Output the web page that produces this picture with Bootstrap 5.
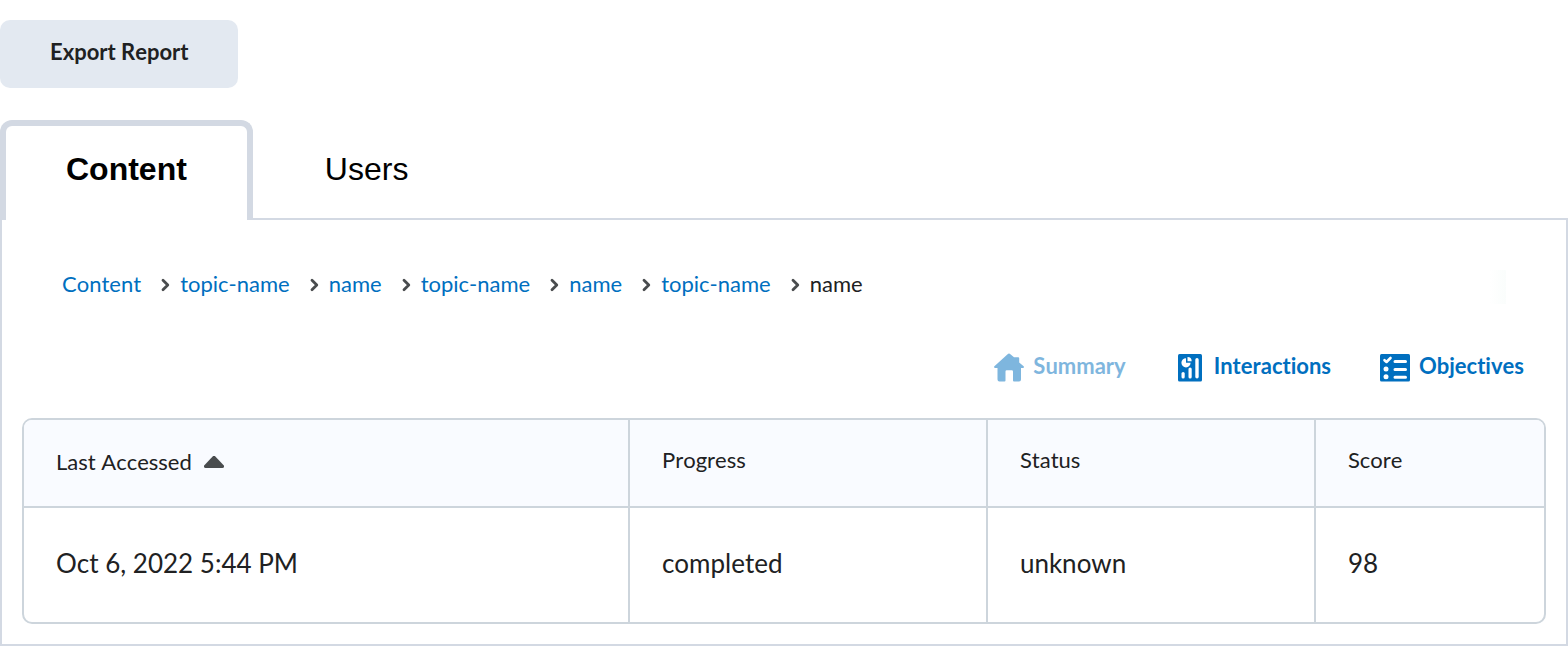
<!DOCTYPE html>
<html lang="en">
<head>
<meta charset="utf-8">
<meta name="viewport" content="width=device-width, initial-scale=1">
<title>Content Report</title>
<link rel="stylesheet" href="https://cdn.jsdelivr.net/npm/bootstrap@5.3.0/dist/css/bootstrap.min.css">
<style>
  body, button { font-kerning: none; font-variant-ligatures: none; }
  body { font-family: Lato, sans-serif; font-size: 22px; line-height: 32px; color: #202122; }
  .export-btn { background: #e3e9f1; color: #202122; font-size: 22px; line-height: 32px; font-weight: 700; padding: 16px 50px 20px; border: 0; border-radius: 10px; }
  .report-tabs { --bs-nav-tabs-border-width: 0; gap: 6px; font-family: "Liberation Sans", Arial, sans-serif; margin-bottom: -2px; position: relative; }
  .report-tabs .nav-link { border: 6px solid transparent; border-bottom: 0; border-radius: 12px 12px 0 0; padding: 23px 60px 31px; margin: 0; font-size: 32px; line-height: 40px; color: #000; }
  .report-tabs .nav-link.active { background: #fff; border-color: #d3d9e3; color: #000; font-weight: 700; }
  .report-panel { border: 2px solid #d3d9e3; padding: 48px 20px 20px; }
  .crumbs { padding: 0 40px; }
  .crumbs a, .view-btn { color: #006fbf; text-decoration: none; }
  .crumb-arrow { width: 9px; height: 14px; margin: 2px 10px 0 20px; }
  .crumb-fade { width: 16px; height: 34px; margin-top: 2px; background: linear-gradient(to right, #fff, #fafdfc); }
  .view-bar { gap: 48px; margin: 46px 0 36px; padding-right: 22px; }
  .view-btn { background: none; border: 0; padding: 0; font-weight: 700; gap: 8px; }
  .view-btn:disabled { opacity: .5; }
  .view-btn svg { margin-top: 2px; margin-bottom: -2px; }
  .grid-frame { border: 2px solid #cdd5dc; border-radius: 10px; overflow: hidden; }
  .report-table { --bs-table-color: #202122; table-layout: fixed; }
  .report-table th, .report-table td { border: 0; border-right: 2px solid #cdd5dc; padding: 0 32px; }
  .report-table th:last-child, .report-table td:last-child { border-right: 0; }
  .report-table th { background: #f9fbff; border-bottom: 2px solid #cdd5dc; height: 87px; padding-bottom: 6px; font-weight: 400; vertical-align: middle; }
  .report-table td { height: 115px; padding-bottom: 5px; font-size: 26px; }
  .col-date { width: 39.8%; } .col-progress { width: 23.55%; } .col-status { width: 21.58%; }
  .sort-btn { background: none; border: 0; padding: 3px 0 0; color: inherit; gap: 12px; }
</style>
</head>
<body class="bg-white">
<main class="pt-1">
  <button type="button" class="export-btn d-block mt-3">Export Report</button>

  <ul class="nav nav-tabs report-tabs mt-4 pt-2" role="tablist">
    <li class="nav-item" role="presentation"><button type="button" class="nav-link active" id="tab-content" role="tab" aria-selected="true" aria-controls="panel-content">Content</button></li>
    <li class="nav-item" role="presentation"><button type="button" class="nav-link" id="tab-users" role="tab" aria-selected="false">Users</button></li>
  </ul>

  <section class="report-panel" id="panel-content" role="tabpanel" aria-labelledby="tab-content">
    <svg class="d-none" aria-hidden="true">
      <symbol id="chevron" viewBox="0 0 9 14"><path d="M2 2.2 6.8 7 2 11.8" fill="none" stroke="#494c4e" stroke-width="2.8" stroke-linecap="round" stroke-linejoin="round"/></symbol>
    </svg>
    <nav class="crumbs d-flex align-items-start justify-content-between" aria-label="Breadcrumb">
      <div class="d-flex flex-wrap align-items-center">
        <a href="#">Content</a><svg class="crumb-arrow"><use href="#chevron"/></svg>
        <a href="#">topic-name</a><svg class="crumb-arrow"><use href="#chevron"/></svg>
        <a href="#">name</a><svg class="crumb-arrow"><use href="#chevron"/></svg>
        <a href="#">topic-name</a><svg class="crumb-arrow"><use href="#chevron"/></svg>
        <a href="#">name</a><svg class="crumb-arrow"><use href="#chevron"/></svg>
        <a href="#">topic-name</a><svg class="crumb-arrow"><use href="#chevron"/></svg>
        <span aria-current="page">name</span>
      </div>
      <div class="crumb-fade"></div>
    </nav>

    <div class="view-bar d-flex flex-wrap justify-content-end">
      <button type="button" class="view-btn d-flex align-items-center" disabled>
        <svg width="32" height="32" viewBox="0 0 32 32" fill="#006fbf" aria-hidden="true"><path d="M14.600 2.300a2 2 0 0 1 2.800 0l3.600 2.900h4.200a1 1 0 0 1 1 1v4.200l4.400 3.800c.8.800.4 1.800-.6 1.800H28V27.400a2 2 0 0 1-2 2h-5a1 1 0 0 1-1-1v-9a1.200 1.200 0 0 0-1.200-1.200h-5.100a1.200 1.200 0 0 0-1.200 1.200V28.400a1 1 0 0 1-1 1H6.500a2 2 0 0 1-2-2V16H2c-1 0-1.400-1-.6-1.800z"/></svg>
        Summary
      </button>
      <button type="button" class="view-btn d-flex align-items-center">
        <svg width="32" height="32" viewBox="0 0 32 32" aria-hidden="true"><rect x="4" y="2" width="24" height="27.500" rx="1.500" fill="#006fbf"/><g fill="#fff"><path d="M12 6.200V10.800h4.600A4.600 4.600 0 1 1 12 6.200z"/><path d="M13.500 5a4.300 4.300 0 0 1 4.200 4.300h-4.200z"/><rect x="7.500" y="20" width="3.200" height="6.500" rx="1.600"/><rect x="14.500" y="15.500" width="3.200" height="11" rx="1.600"/><rect x="21.300" y="6" width="3.400" height="20.500" rx="1.700"/></g></svg>
        Interactions
      </button>
      <button type="button" class="view-btn d-flex align-items-center">
        <svg width="32" height="32" viewBox="0 0 32 32" aria-hidden="true"><rect x="1" y="2" width="30" height="27.500" rx="1.500" fill="#006fbf"/><g fill="none" stroke="#fff" stroke-width="3" stroke-linecap="round" stroke-linejoin="round"><path d="M16 9.500h10.500M16 17.500h10.500M16 25.300h10.500"/><path d="m5.500 8.200 2 1.800 4-4" stroke-width="2.600"/></g><circle cx="7" cy="17" r="2.500" fill="#fff"/><circle cx="7" cy="24.700" r="2.500" fill="#fff"/></svg>
        Objectives
      </button>
    </div>

    <div class="grid-frame">
      <table class="table report-table align-middle mb-0">
        <colgroup><col class="col-date"><col class="col-progress"><col class="col-status"><col></colgroup>
        <thead>
          <tr>
            <th scope="col" aria-sort="ascending"><button type="button" class="sort-btn d-flex align-items-center">Last Accessed <svg width="20" height="12" viewBox="0 0 20 12" fill="#494c4e" aria-hidden="true"><path d="M8.400.7a2.200 2.200 0 0 1 3.200 0l8 8.500c1 1.100.5 2.800-1.200 2.800H1.600C-.1 12-.6 10.300.4 9.200z"/></svg></button></th>
            <th scope="col">Progress</th>
            <th scope="col">Status</th>
            <th scope="col">Score</th>
          </tr>
        </thead>
        <tbody>
          <tr><td>Oct 6, 2022 5:44 PM</td><td>completed</td><td>unknown</td><td>98</td></tr>
        </tbody>
      </table>
    </div>
  </section>
</main>
<script src="https://cdn.jsdelivr.net/npm/bootstrap@5.3.0/dist/js/bootstrap.bundle.min.js"></script>
</body>
</html>
